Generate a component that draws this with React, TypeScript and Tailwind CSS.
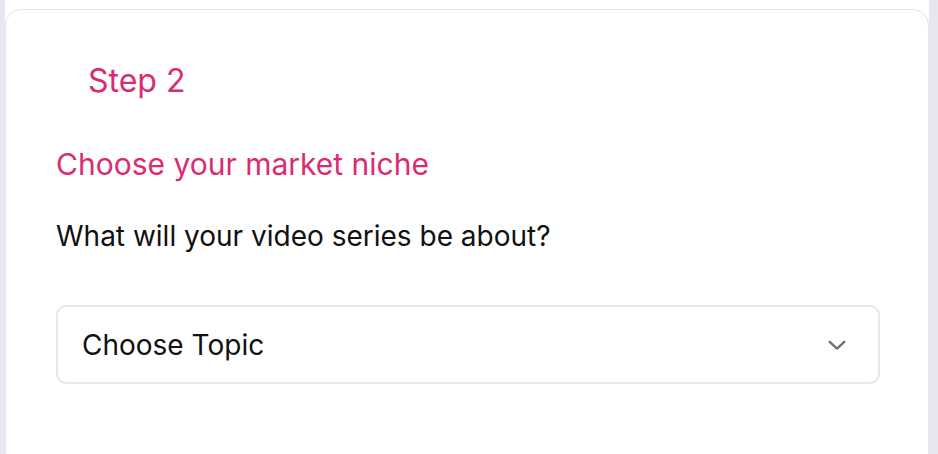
import React from "react";

export default function App() {
  return (
    <div className="flex h-[454px] w-[938px] overflow-hidden bg-white" style={{ fontFamily: "Inter, 'Noto Sans', sans-serif" }}>
      <div className="w-[5px] shrink-0 bg-[#e7e7ef]" />
      <div className="flex-1 pt-[9px]">
        <div className="h-[520px] rounded-t-[16px] border border-[#e4e4ea] bg-white pl-[50px] pr-[48px] pt-[55px]">
          <div className="pl-[32px] text-[32px] leading-[32px] text-[#da2c72]">Step 2</div>
          <div className="mt-[52px] text-[30px] leading-[30px] text-[#da2c72]">Choose your market niche</div>
          <div className="mt-[43px] text-[28px] leading-[28px] text-[#111111]">What will your video series be about?</div>
          <div className="mt-[55px] flex h-[79px] items-center justify-between rounded-[10px] border-2 border-[#e6e6ec] pl-[24px] pr-[30px]">
            <span className="text-[28px] leading-[28px] text-[#111111]">Choose Topic</span>
            <svg width="22" height="22" viewBox="0 0 24 24" fill="none" stroke="#6f6f6f" strokeWidth="2.5" strokeLinecap="round" strokeLinejoin="round">
              <path d="M4 8.5l8 7.5 8-7.5" />
            </svg>
          </div>
        </div>
      </div>
      <div className="w-[9px] shrink-0 bg-[#e7e7ef]" />
    </div>
  );
}
